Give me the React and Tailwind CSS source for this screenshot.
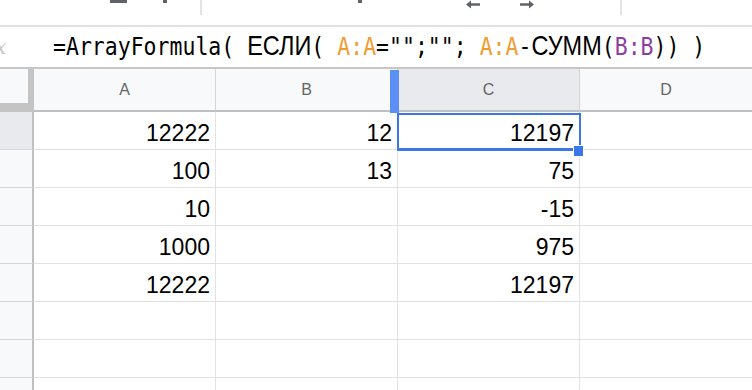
import React from "react";

const rows = [
  ["12222", "12", "12197"],
  ["100", "13", "75"],
  ["10", "", "-15"],
  ["1000", "", "975"],
  ["12222", "", "12197"],
  ["", "", ""],
  ["", "", ""],
  ["", "", ""],
];

function ArrowLeft() {
  return (
    <svg width="14" height="9" viewBox="0 0 14 9">
      <path d="M0 4.5 L5 0.5 L5 3.2 L14 3.2 L14 5.8 L5 5.8 L5 8.5 Z" fill="#5f6368" />
    </svg>
  );
}
function ArrowRight() {
  return (
    <svg width="14" height="9" viewBox="0 0 14 9">
      <path d="M14 4.5 L9 0.5 L9 3.2 L0 3.2 L0 5.8 L9 5.8 L9 8.5 Z" fill="#5f6368" />
    </svg>
  );
}

const mono = "font-['DejaVu_Sans_Mono',monospace]";
const sans = "font-['Liberation_Sans',Arial,sans-serif]";

export default function App() {
  return (
    <div className={`w-[752px] h-[390px] overflow-hidden bg-white ${sans}`}>
      {/* toolbar remnants */}
      <div className="h-[25px] flex items-start">
        <div className="ml-[110px] w-[17px] h-[3px] bg-[#5f6368]" />
        <div className="ml-[36px] w-[4px] h-[3px] bg-[#5f6368]" />
        <div className="ml-[33px] w-[2px] h-[15px] bg-[#e3e3e3]" />
        <div className="ml-[156px] w-[4px] h-[3px] bg-[#5f6368]" />
        <div className="ml-[104px]"><ArrowLeft /></div>
        <div className="ml-[40px]"><ArrowRight /></div>
        <div className="ml-[86px] w-[2px] h-[15px] bg-[#e3e3e3]" />
      </div>
      <div className="h-[2px] bg-[#e1e1e1]" />
      {/* formula bar */}
      <div className="h-[40px] flex items-center">
        <div className="w-[53px] shrink-0 overflow-hidden">
          <span className="block -ml-[5px] text-[20px] italic text-[#c8c8c8] font-['DejaVu_Serif',serif]">x</span>
        </div>
        <div className="flex items-baseline whitespace-pre text-[21.5px] text-black leading-none scale-y-[1.16] origin-center">
          <span className={mono}>=ArrayFormula( </span>
          <span className={`${sans} text-[23.5px]`}>ЕСЛИ</span>
          <span className={mono}>( </span>
          <span className={`${mono} text-[#f29b2f]`}>A:A</span>
          <span className={mono}>="";""; </span>
          <span className={`${mono} text-[#f29b2f]`}>A:A</span>
          <span className={mono}>-</span>
          <span className={`${sans} text-[23.5px]`}>СУММ</span>
          <span className={mono}>(</span>
          <span className={`${mono} text-[#8a3fa3]`}>B:B</span>
          <span className={mono}>)) )</span>
        </div>
      </div>
      <div className="h-[2px] bg-[#c6c6c6]" />
      {/* grid */}
      <div className="relative">
        {/* header row */}
        <div className="flex h-[43px]">
          <div className="w-[34px] h-[43px] bg-[#c4c4c4]">
            <div className="w-[28px] h-[34px] bg-[#f8f9fa]" />
          </div>
          <div className="w-[182px] border-r border-b-2 border-r-[#d4d4d4] border-b-[#c0c0c0] bg-[#f8f9fa] flex items-center justify-center text-[16px] text-[#666]">A</div>
          <div className="w-[182px] border-r border-b-2 border-r-[#d4d4d4] border-b-[#c0c0c0] bg-[#f8f9fa] flex items-center justify-center text-[16px] text-[#666]">B</div>
          <div className="w-[182px] border-r border-b-2 border-r-[#d4d4d4] border-b-[#c0c0c0] bg-[#e8eaed] flex items-center justify-center text-[16px] text-[#666]">C</div>
          <div className="flex-1 border-b-2 border-b-[#c0c0c0] bg-[#f8f9fa] flex items-center justify-center text-[16px] text-[#666]">D</div>
        </div>
        {rows.map((r, i) => (
          <div key={i} className="flex h-[38px]">
            <div className={`w-[34px] border-r-2 border-r-[#c0c0c0] border-b border-b-[#d6d6d6] ${i === 0 ? "bg-[#e8eaed]" : "bg-[#f8f9fa]"}`} />
            {r.map((v, j) => (
              <div key={j} className="w-[182px] border-r border-b border-[#e2e2e2] flex items-end justify-end pr-[5px] pb-[4px] text-[23px] leading-[23px] text-black">
                {v}
              </div>
            ))}
            <div className="flex-1 border-b border-[#e2e2e2]" />
          </div>
        ))}
        {/* column resize indicator */}
        <div className="absolute left-[390px] top-[1px] w-[9px] h-[43px] bg-[#5b8ff5]" />
        {/* selection */}
        <div className="absolute left-[397px] top-[44px] w-[184px] h-[38px] border-2 border-b-[3px] border-[#3b78e7]" />
        <div className="absolute left-[573px] top-[76px] w-[11px] h-[12px] bg-[#3b78e7] border border-white" />
      </div>
    </div>
  );
}
